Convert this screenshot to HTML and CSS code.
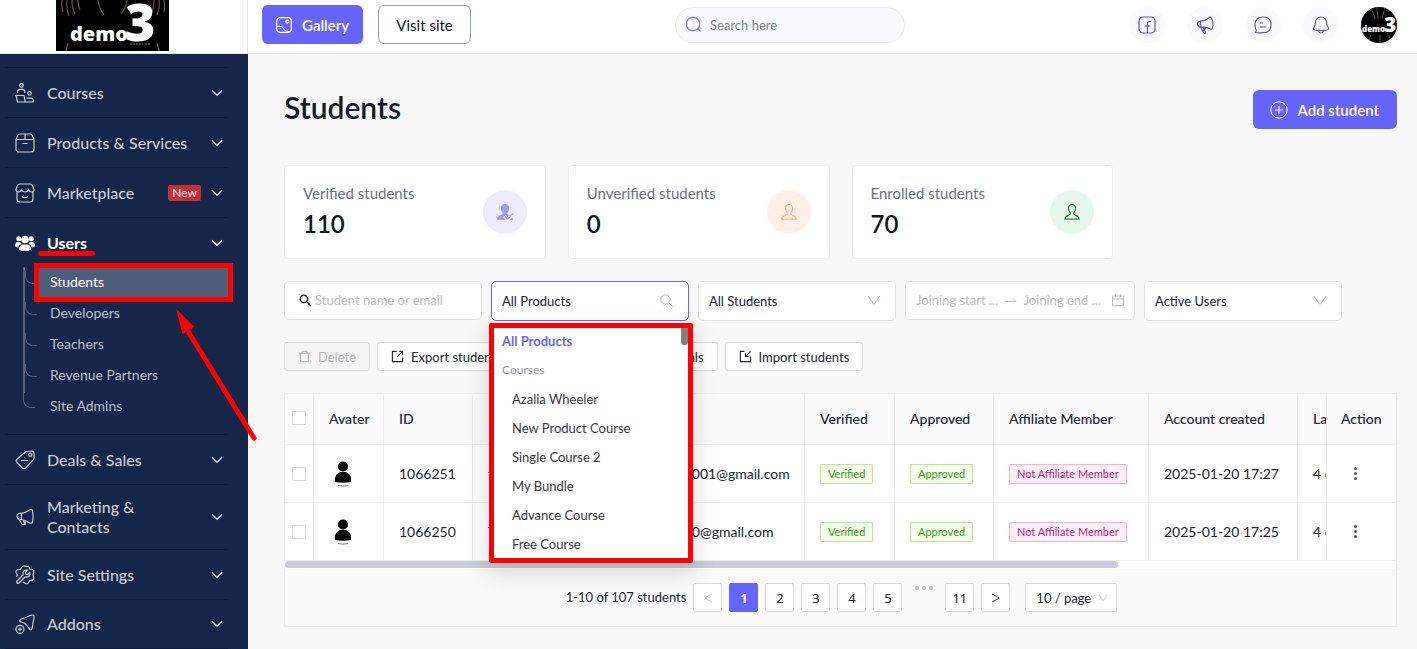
FILE: index.html
```html
<!DOCTYPE html>
<html lang="en">
<head>
<meta charset="utf-8">
<meta name="viewport" content="width=device-width, initial-scale=1">
<title>Students</title>
<link rel="stylesheet" href="styles.css">
</head>
<body>
<svg width="0" height="0" class="defs" aria-hidden="true">
  <symbol id="chev" viewBox="0 0 12 8"><path d="M1 1.2l5 5 5-5"/></symbol>
  <symbol id="vee" viewBox="0 0 14 11"><path d="M1 1l6 8.500L13 1"/></symbol>
  <symbol id="logo" viewBox="0 0 113 51">
    <rect width="113" height="51" fill="#000"/>
    <path d="M6 0q-1 6 1 12M11 0q-1 8 2 16M16 0q0 8 3 14M22 0q0 6 2 10M42 0q1 8 6 15M71 0q-1 8-6 14M98 0q0 8-3 15M103 0q1 8-2 15M108 0q1 6 0 12M12 43l-2 8M101 43l2 8" fill="none" stroke="#8a7450" stroke-width="1.2" opacity=".75"/>
    <text x="14" y="41" class="logo-text" font-size="20">demo</text>
    <text x="69" y="41" class="logo-text" font-size="52">3</text>
    <path d="M74 44h13M89 44h5" stroke="#777" stroke-width="1" stroke-dasharray="2 1"/>
  </symbol>
  <symbol id="user" viewBox="0 0 18 18"><path d="M9 1.5c-2.400 0-3.700 1.800-3.500 4.200.1 1.700.8 3.200 1.700 4 .4.900.1 1.700-.8 2.100-2 .8-4.400 1.300-4.700 4.400h14.600c-.3-3.100-2.700-3.600-4.700-4.400-.9-.4-1.200-1.200-.8-2.100.9-.8 1.600-2.300 1.700-4C12.700 3.300 11.400 1.500 9 1.500z"/></symbol>
  <symbol id="person" viewBox="0 0 18 28"><circle cx="9" cy="6.500" r="5" fill="#000"/><path d="M1 22v-3c0-4 3-7.300 8-7.300s8 3.300 8 7.300v3q-8 1.300-16 0z" fill="#000"/><path d="M4 25.500q5 1.300 10 0" fill="none" stroke="#555" stroke-width=".8"/></symbol>
  <symbol id="exp" viewBox="0 0 14 14"><path d="M6 1.500H1.500v11h11V8M6.500 7.500L12.500 1.500M9 1.500h3.500V5"/></symbol>
  <symbol id="imp" viewBox="0 0 14 14"><path d="M6 1.500H1.500v11h11V7M12.500 1.500l-5 5M7 3.500v3.500h3.500"/></symbol>
</svg>

<div class="app">
  <aside class="sidebar">
    <a class="brand" href="#"><svg class="brand-logo" role="img" aria-label="demo 3"><use href="#logo"/></svg></a>
    <nav class="menu">
      <a class="item" href="#">
        <svg class="ic" viewBox="0 0 20 20"><circle cx="6.500" cy="2.500" r="1.800"/><circle cx="14.500" cy="10.300" r="1.800"/><path d="M2.500 10V8.500C2.500 7 3.400 6.300 5 6.300h2.500c1.500 0 2.300.8 2.300 2.200V10M1 12.500h8l1.200 6.500H2.500zM9.500 19h8.700v-1.800c0-1.300-.6-2-2-2h-4.500"/></svg>
        <span class="label">Courses</span><svg class="chev"><use href="#chev"/></svg></a>
      <a class="item" href="#">
        <svg class="ic" viewBox="0 0 20 20"><path d="M1 6.500L2.700 2.600Q3.300 1 5 1h10q1.700 0 2.300 1.600L19 6.500V16q0 3-3 3H4q-3 0-3-3zM1 6.500h18M10 1v5.500M7.500 10.500h5"/></svg>
        <span class="label">Products &amp; Services</span><svg class="chev"><use href="#chev"/></svg></a>
      <a class="item" href="#">
        <svg class="ic" viewBox="0 0 20 20"><path d="M2 9v7q0 3 3 3h10q3 0 3-3V9M1 6.500L2.300 3Q3 1 5 1h10q2 0 2.700 2L19 6.500q0 2.500-2.300 2.500-2.200 0-3.200-2.300Q12.500 9 10 9T6.500 6.700Q5.500 9 3.300 9 1 9 1 6.500zM7 13.500q3 2.500 6 0"/></svg>
        <span class="label">Marketplace</span><span class="new">New</span><svg class="chev"><use href="#chev"/></svg></a>
      <div class="group">
        <a class="item active" href="#">
          <svg class="ic solid" viewBox="0 0 20 18"><circle cx="10" cy="5.500" r="3.800"/><circle cx="3.800" cy="4.800" r="2.500"/><circle cx="16.200" cy="4.800" r="2.500"/><path d="M4 16q0-5.500 4-5.500h4q4 0 4 5.500-6 1.700-12 0zM0 12.300Q0 8 3 8h2.200q1 2 1.300 2-2.800.6-3.400 3.500-2-.2-3.100-1.200zM20 12.300Q20 8 17 8h-2.200q-1 2-1.300 2 2.800.6 3.400 3.500 2-.2 3.100-1.200z"/></svg>
          <span class="label">Users</span><svg class="chev"><use href="#chev"/></svg></a>
        <ul class="sub">
          <li class="current"><a href="#">Students</a></li>
          <li><a href="#">Developers</a></li>
          <li><a href="#">Teachers</a></li>
          <li><a href="#">Revenue Partners</a></li>
          <li><a href="#">Site Admins</a></li>
        </ul>
        <span class="mark-line"></span>
        <svg class="mark-arrow" viewBox="0 0 84 136" aria-hidden="true"><path d="M80 131L15 26" stroke="#f00" stroke-width="5" stroke-linecap="round"/><path d="M2 2l18.500 18L8.500 27z" fill="#f00"/></svg>
      </div>
      <a class="item" href="#">
        <svg class="ic" viewBox="0 0 20 20"><path d="M11.500 1.500L17 1q2 0 2 2v5q0 1-.8 1.800L10.500 18q-1.500 1.500-3 0L2 12.500q-1.800-1.700 0-3.300l8-7q.7-.6 1.500-.7zM6 10.500h7"/><circle cx="15.300" cy="4.800" r="1.600"/><path d="M9.500 7.500v.5M9.500 13v.5"/></svg>
        <span class="label">Deals &amp; Sales</span><svg class="chev"><use href="#chev"/></svg></a>
      <a class="item" href="#">
        <svg class="ic" viewBox="0 0 20 20"><path d="M6 6.300Q10 6 14 3.200q2.700-1.800 3.500.5 1.500 5.300 0 11.500-.8 2-3.500.2Q10 12.800 6 12.500H5q-3-.2-3-3.200t3-3zM6.500 6.500v6M4.500 12.700l2 3.800q.7 1.300 2 .8t.7-1.700l-1-2.600M8.700 17.300h1.500v-3"/></svg>
        <span class="label">Marketing &amp;<br>Contacts</span><svg class="chev"><use href="#chev"/></svg></a>
      <a class="item" href="#">
        <svg class="ic" viewBox="0 0 20 20"><path d="M5.500 16.500L4 18q-1 1-2 0t0-2l6-6Q7.500 7 9 5.800q1.500-1 3.500-.6l-2 2 .3 2 2 .3 2-2q.6 2-.6 3.500-1.500 1.300-4.200 1zM1.500 12L2.500 10 1 7.500q-.5-1.500 1-2.500l3-.5L7 2q1-1.500 3-.9t3 .4 1.700 2.500l3 .5q1.600 1 1 2.700L18 10l.8 2.700q.4 1.800-1.300 2.500l-2.800.4-1.500 2.400q-1.200 1.200-2.700.5L8 17"/></svg>
        <span class="label">Site Settings</span><svg class="chev"><use href="#chev"/></svg></a>
      <a class="item last" href="#">
        <svg class="ic" viewBox="0 0 20 20"><path d="M5 7.500Q4.200 6 6 5.200L16 1.300q3.500-1 3 2.200L17 14.500q-.8 2.500-2.300.8L12 11.500q-1-1.500-2.500-2.300z"/><circle cx="5" cy="15.300" r="4"/><path d="M5 13.300v4M3 15.300h4"/></svg>
        <span class="label">Addons</span><svg class="chev"><use href="#chev"/></svg></a>
    </nav>
  </aside>

  <div class="page">
    <header class="topbar">
      <button class="btn primary gallery"><svg viewBox="0 0 16 16"><rect x=".7" y=".7" width="14.600" height="14.600" rx="3.500"/><circle cx="11.300" cy="4.600" r="1.500"/><path d="M1 9.500q5-1 6.500 2t7 3.500"/></svg>Gallery</button>
      <button class="btn outline">Visit site</button>
      <label class="search"><svg viewBox="0 0 18 18"><circle cx="8" cy="8" r="6.700"/><path d="M13 13l2.800 2.500"/></svg><input type="search" placeholder="Search here" aria-label="Search here"></label>
      <div class="tools">
        <button aria-label="Facebook"><svg viewBox="0 0 18 18"><rect x="1" y="1" width="16" height="16" rx="4"/><path d="M13 5.500h-1.500q-2 0-2 2V17M7 10h5.500"/></svg></button>
        <button aria-label="Announcements"><svg viewBox="0 0 18 18"><path d="M4.500 5Q10 5 13 1.500q1-1 2 0Q18 6 16.500 12q-.5 1.500-2 1Q9 10.500 5 11.500M4.500 5Q1.500 5.500 1.500 8T5 11.500zM5 11.500q1 3 3 5.500 1.500.8 1.500-.8Q9 13.500 6.500 11.300M7 15l3-3.500"/></svg></button>
        <button aria-label="Messages"><svg viewBox="0 0 18 18"><path d="M1.500 16.500q.7-1 .7-2.500Q1 12 1 9q0-8 8-8t8 8-8 7.700q-4 .6-7.500-.2zM6 7h3M6 11h6"/></svg></button>
        <button aria-label="Notifications"><svg viewBox="0 0 18 18"><path d="M9 1Q4 1 3.500 6.500 3.500 9 1.800 11.500q-1 2 1 2.500 6.200 1 12.400 0 2-.5 1-2.500Q14.500 9 14.500 6.500 14 1 9 1zM6.500 14.800Q7 17 9 17t2.500-2.200"/></svg></button>
        <a class="avatar" href="#" aria-label="Account"><svg viewBox="0 0 36 36"><rect width="36" height="36" fill="#000"/><path d="M10 0l4 12M16 0l1 12M24 0l-3 12M10 28l-3 8M19 28v8M28 28l3 8" stroke="#555"/><text x="1" y="25" class="logo-text" font-size="8">demo</text><text x="23" y="25" class="logo-text" font-size="21">3</text></svg></a>
      </div>
    </header>

    <main>
      <div class="head">
        <h1>Students</h1>
        <button class="btn primary add"><svg viewBox="0 0 18 18"><circle cx="9" cy="9" r="8.200"/><path d="M9 5v8M5 9h8"/></svg>Add student</button>
      </div>

      <section class="cards">
        <div class="card"><div><p>Verified students</p><strong>110</strong></div><span class="round violet"><svg viewBox="0 0 18 18"><use href="#user" fill="currentColor"/><path d="M8.500 13l3 3.500 6-5.500" stroke="#eeebff" stroke-width="3.500"/><path d="M9 13.500l2.500 2.700 6-6"/></svg></span></div>
        <div class="card"><div><p>Unverified students</p><strong>0</strong></div><span class="round peach"><svg><use href="#user"/></svg></span></div>
        <div class="card"><div><p>Enrolled students</p><strong>70</strong></div><span class="round green"><svg><use href="#user"/></svg></span></div>
      </section>

      <section class="filters">
        <label class="field name"><svg class="mag" viewBox="0 0 14 14"><circle cx="5.300" cy="5.300" r="3.900"/><path d="M8.300 8.300l4.500 4.500"/></svg><input type="text" placeholder="Student name or email" aria-label="Student name or email"></label>
        <div class="field open">
          <input type="text" role="combobox" aria-expanded="true" aria-label="Product" value="All Products">
          <svg class="mag grey" viewBox="0 0 14 14"><circle cx="5.500" cy="5.500" r="4.700"/><path d="M9 9l4.500 4.500"/></svg>
          <ul class="drop" role="listbox">
            <li class="sel" role="option">All Products</li>
            <li class="cap">Courses</li>
            <li class="opt" role="option">Azalia Wheeler</li>
            <li class="opt" role="option">New Product Course</li>
            <li class="opt" role="option">Single Course 2</li>
            <li class="opt" role="option">My Bundle</li>
            <li class="opt" role="option">Advance Course</li>
            <li class="opt" role="option">Free Course</li>
          </ul>
        </div>
        <div class="field"><select aria-label="Student group"><option>All Students</option></select><svg class="down"><use href="#vee"/></svg></div>
        <div class="field dates"><input type="text" placeholder="Joining start ..." aria-label="Joining start date"><svg class="arr" viewBox="0 0 12 6"><path d="M0 4.500h11L8 1.500"/></svg><input type="text" placeholder="Joining end ..." aria-label="Joining end date"><svg class="cal" viewBox="0 0 12 12"><path d="M.5 2h11v9.500H.5zM.5 5h11M3.500 0v3.500M8.500 0v3.500"/></svg></div>
        <div class="field"><select aria-label="User status"><option>Active Users</option></select><svg class="down"><use href="#vee"/></svg></div>
      </section>

      <section class="actions">
        <button class="small" disabled><svg viewBox="0 0 14 14"><path d="M1 3.500h12M4.500 3.500v-2h5v2M2.500 3.500l.5 9h8l.5-9"/></svg>Delete</button>
        <button class="small"><svg><use href="#exp"/></svg>Export students</button>
        <button class="small wide"><svg><use href="#exp"/></svg>Send login credentials</button>
        <button class="small"><svg><use href="#imp"/></svg>Import students</button>
      </section>

      <section class="panel">
        <table>
          <colgroup><col class="c-check"><col class="c-avatar"><col class="c-id"><col class="c-name"><col><col class="c-ver"><col class="c-app"><col class="c-aff"><col class="c-date"><col class="c-last"><col class="c-act"></colgroup>
          <thead><tr><th><input type="checkbox" aria-label="Select all"></th><th>Avater</th><th>ID</th><th>Name</th><th>Email</th><th>Verified</th><th>Approved</th><th>Affiliate Member</th><th>Account created</th><th class="cut">Last login</th><th>Action</th></tr></thead>
          <tbody>
            <tr><td><input type="checkbox" aria-label="Select 1066251"></td><td><svg class="person"><use href="#person"/></svg></td><td>1066251</td><td>test</td><td>student001@gmail.com</td><td><span class="tag ok">Verified</span></td><td><span class="tag ok">Approved</span></td><td><span class="tag pink">Not Affiliate Member</span></td><td>2025-01-20 17:27</td><td class="cut">4 days ago</td><td><button class="more" aria-label="More actions"><i></i><i></i><i></i></button></td></tr>
            <tr><td><input type="checkbox" aria-label="Select 1066250"></td><td><svg class="person"><use href="#person"/></svg></td><td>1066250</td><td>Test</td><td>student0@gmail.com</td><td><span class="tag ok">Verified</span></td><td><span class="tag ok">Approved</span></td><td><span class="tag pink">Not Affiliate Member</span></td><td>2025-01-20 17:25</td><td class="cut">4 days ago</td><td><button class="more" aria-label="More actions"><i></i><i></i><i></i></button></td></tr>
          </tbody>
        </table>
        <div class="hbar"><span></span></div>
        <div class="pager">
          <span class="total">1-10 of 107 students</span>
          <button disabled aria-label="Previous page"><svg viewBox="0 0 10 10"><path d="M9 1L1.500 5 9 9"/></svg></button>
          <button class="on">1</button><button>2</button><button>3</button><button>4</button><button>5</button>
          <span class="dots"><i></i><i></i><i></i></span>
          <button>11</button>
          <button aria-label="Next page"><svg viewBox="0 0 10 10"><path d="M1 1l7.500 4L1 9"/></svg></button>
          <div class="size"><select aria-label="Rows per page"><option>10 / page</option></select><svg class="down"><use href="#vee"/></svg></div>
        </div>
      </section>
    </main>
  </div>
</div>
</body>
</html>
```
FILE: styles.css
```css
* { box-sizing: border-box; }
body { margin: 0; font-family: Lato, "Liberation Sans", sans-serif; font-size: 14px; color: #20242c; background: #f8f8f8; }
button, input, select { font: inherit; color: inherit; margin: 0; }
button { cursor: pointer; }
a { color: inherit; text-decoration: none; }
svg { fill: none; stroke: currentColor; flex: none; display: block; }
ul { list-style: none; margin: 0; padding: 0; }
p { margin: 0; }
.defs { position: absolute; }
.logo-text { font-family: "Open Sans", sans-serif; font-weight: 800; fill: #fff; stroke: none; }
.app { display: flex; height: 100vh; overflow: hidden; }

/* sidebar */
.sidebar { flex: none; width: 248px; background: #152649; color: #c9cdd5; }
.brand { display: flex; justify-content: center; height: 54px; background: #fff; border-right: 1px solid #e3e5e8; border-bottom: 1px solid #e3e5e8; padding-right: 22px; }
.brand-logo { width: 113px; height: 51px; stroke: none; }
.menu { padding: 13px 20px 0 5px; }
.item { display: flex; align-items: center; gap: 12px; min-height: 50px; padding: 12px 5px 12px 10px; border-top: 1px solid #0f1d3b; font-size: 16px; line-height: 20px; font-weight: 500; }
.item.last { border-bottom: 1px solid #0f1d3b; }
.label { flex: 1; }
.ic { width: 20px; height: 20px; stroke-width: 1.200; overflow: visible; }
.ic.solid { fill: currentColor; stroke: none; height: 18px; }
.chev { width: 12px; height: 8px; stroke-width: 1.600; }
.active { color: #fff; font-weight: 700; }
.new { background: #c42f3c; color: #f0d9dd; border-radius: 2px; font-size: 12px; line-height: 16px; padding: 0 4px; margin-right: -2px; }
.group { position: relative; padding-bottom: 13px; }
.sub { margin-left: 18px; border-left: 2px solid #55607a; height: 126px; margin-bottom: 28px; font-size: 14px; }
.sub li { position: relative; height: 31px; padding: 1px 0 1px 14px; }
.sub li::before { content: ""; position: absolute; left: 0; top: 4px; width: 11px; height: 12px; border-left: 1px solid #55607a; border-bottom: 1px solid #55607a; border-bottom-left-radius: 8px; }
.sub li:last-child::before { left: -2px; top: 1px; height: 15px; }
.sub a { display: block; height: 29px; line-height: 28px; padding-left: 11px; color: #b9bfca; }
.sub .current a { position: relative; background: #4f5d78; color: #fff; outline: 5px solid #f00; }
.mark-line { position: absolute; left: 33px; top: 34px; width: 57px; height: 5px; border-radius: 3px; background: #f00; }
.mark-arrow { position: absolute; z-index: 5; left: 169px; top: 90px; width: 84px; height: 136px; stroke: none; }

/* top bar */
.page { flex: 1; min-width: 0; }
.topbar { display: flex; align-items: center; height: 54px; padding: 0 20px 4px 14px; background: #fff; border-bottom: 1px solid #e3e5e8; }
.btn { display: flex; align-items: center; justify-content: center; height: 39px; border-radius: 6px; font-size: 15px; }
.primary { border: 0; background: #6763ff; color: #fff; font-weight: 600; }
.gallery { padding: 0 14px; gap: 10px; }
.gallery svg { width: 16px; height: 16px; stroke-width: 1.200; }
.outline { margin-left: 15px; width: 93px; background: #fff; border: 1px solid #94a0b3; color: #14181f; }
.search { display: flex; align-items: center; gap: 7px; width: 230px; height: 36px; margin-left: 204px; padding: 0 9px; border: 1px solid #eceef2; border-radius: 18px; background: #f9fafc; color: #8884ff; }
.search svg { width: 18px; height: 18px; stroke-width: 1.400; }
input { border: 0; outline: 0; background: none; padding: 0; min-width: 0; width: 100%; }
.search input { font-size: 13px; }
.search input::placeholder { color: #80858f; }
.tools { display: flex; gap: 22px; margin-left: auto; }
.tools button { display: flex; align-items: center; justify-content: center; width: 36px; height: 36px; padding: 0; border: 0; border-radius: 50%; background: #f9fafc; color: #554fe0; }
.tools button svg { width: 18px; height: 18px; stroke-width: 1.200; }
.avatar svg { width: 36px; height: 36px; border-radius: 50%; }

/* content */
main { padding: 36px 20px 0 36px; }
.head { display: flex; justify-content: space-between; align-items: flex-start; height: 39px; }
h1 { margin: 0; font-size: 30px; line-height: 34px; font-weight: 600; color: #141a26; }
.add { padding: 0 18px 0 17px; gap: 10px; }
.add svg { width: 18px; height: 18px; stroke-width: 1; }
.cards { display: grid; grid-template-columns: repeat(4, 1fr); gap: 22px; margin-top: 36px; }
.card { display: flex; justify-content: space-between; align-items: center; height: 94px; padding: 0 18px; background: #fff; border: 1px solid #ededf0; border-radius: 4px; }
.card div { padding-bottom: 2px; }
.card p { font-size: 15px; line-height: 20px; color: #6b7482; }
.card strong { display: block; margin-top: 6px; font-size: 24px; line-height: 30px; font-weight: 600; color: #10151f; }
.round { display: flex; align-items: center; justify-content: center; width: 44px; height: 44px; border-radius: 50%; }
.round svg { width: 18px; height: 18px; stroke-width: 1.200; }
.violet { background: #eeebff; color: #a29bff; }
.peach { background: #ffefe8; color: #ffb18d; }
.green { background: #e4f8ec; color: #3c7d4d; }

.filters { display: flex; gap: 9px; margin-top: 22px; font-size: 13px; }
.field { position: relative; display: flex; align-items: center; flex: 0 1 198px; min-width: 0; height: 40px; padding: 0 10px 1px; background: #fff; border: 1px solid #e2e2e4; border-radius: 5px; }
.field input::placeholder { color: #bdbdbf; opacity: 1; }
.field.name { padding-left: 14px; gap: 3px; height: 39px; }
.mag { width: 13px; height: 13px; stroke-width: 1.600; }
.grey { width: 14px; height: 14px; color: #b5b5b8; stroke-width: 1; margin-right: 4px; }
.open { border-color: #6763ff; }
select { appearance: none; width: 100%; border: 0; background: none; outline: 0; padding: 0; }
.down { width: 14px; height: 11px; margin-right: 4px; color: #b5b5b8; stroke-width: 1; pointer-events: none; }
.dates { flex-basis: 230px; gap: 7px; height: 39px; }
.dates input { width: auto; flex: 1 1 0; }
.arr { width: 12px; height: 6px; color: #bdbdbf; }
.cal { width: 12px; height: 12px; color: #bdbdbf; }
.drop { position: absolute; z-index: 4; left: -3px; top: 41px; width: 204px; height: 240px; overflow: hidden; background: #fff; border: 5px solid #f00; border-radius: 2px; box-shadow: 0 8px 20px 4px rgba(0,0,0,.12); color: #3a3a3d; }
.drop li { height: 29px; line-height: 26px; padding-left: 8px; }
.drop .opt { padding-left: 18px; }
.drop .sel { color: #6763ff; font-weight: 700; }
.drop .cap { font-size: 12px; color: #98989b; }
.drop::after { content: ""; position: absolute; right: 0; top: 0; width: 7px; height: 17px; background: #808080; border-radius: 0 0 3px 3px; }

.actions { display: flex; gap: 7px; margin-top: 21px; }
.small { display: flex; align-items: center; gap: 7px; height: 29px; padding: 0 13px; border: 1px solid #d9d9da; border-radius: 3px; background: #fff; font-size: 13px; color: #22252b; }
.small svg { width: 13px; height: 13px; stroke-width: 1.200; }
.small:disabled { background: #f4f4f4; color: #b9b9bb; }
.wide { width: 195px; justify-content: flex-end; }

/* table */
.panel { margin-top: 22px; border: 1px solid #efeff0; background: #fafafa; }
table { width: 100%; table-layout: fixed; border-collapse: separate; border-spacing: 0; }
.c-check { width: 29px; } .c-avatar { width: 70px; } .c-id { width: 89px; } .c-name { width: 157px; }
.c-ver { width: 90px; } .c-app { width: 99px; } .c-aff { width: 155px; } .c-date { width: 149px; }
.c-last { width: 29px; } .c-act { width: 69px; }
th, td { height: 58px; padding: 0 0 0 15px; border-right: 1px solid #efeff0; border-bottom: 1px solid #efeff0; text-align: left; white-space: nowrap; font-weight: 400; background: #fff; font-size: 14px; }
th { height: 51px; padding-bottom: 2px; background: #fafafa; font-weight: 500; }
tr > :last-child { border-right: 0; padding-left: 14px; }
tr > :first-child { padding-left: 7px; }
.cut { overflow: hidden; }
input[type=checkbox] { appearance: none; display: block; width: 14px; height: 14px; border: 1px solid #d9d9da; border-radius: 1px; background: #fff; }
.person { width: 18px; height: 28px; margin-left: 5px; stroke: none; }
.tag { display: inline-block; padding: 0 7px; border: 1px solid; border-radius: 1px; font-size: 11px; line-height: 18px; }
.ok { color: #389e0d; background: #f6ffed; border-color: #b7eb8f; }
.pink { color: #c41d7f; background: #fff0f6; border-color: #ffadd2; }
.more { display: flex; flex-direction: column; gap: 2px; padding: 0 13px; border: 0; background: none; }
.more i { width: 3px; height: 3px; border-radius: 50%; background: #555; }
.hbar { height: 8px; background: #fff; }
.hbar span { display: block; width: 75%; height: 7px; border-radius: 4px; background: #c9cdd6; }
.pager { display: flex; justify-content: center; gap: 7px; padding: 14px 0 14px 2px; }
.total { line-height: 28px; font-size: 13px; }
.pager button { display: flex; align-items: center; justify-content: center; width: 29px; height: 29px; padding: 0; border: 1px solid #d9d9da; border-radius: 2px; background: #fff; font-family: "Noto Sans", sans-serif; font-size: 13px; }
.pager button svg { width: 10px; height: 10px; stroke-width: 1; }
.pager button:disabled { color: #c2c2c4; }
.pager .on { background: #6763ff; border-color: #6763ff; color: #fff; font-weight: 700; }
.dots { display: flex; justify-content: center; gap: 3px; width: 29px; padding-top: 3px; }
.dots i { width: 4px; height: 4px; border-radius: 50%; background: #c0c0c2; }
.size { display: flex; align-items: center; width: 92px; height: 29px; margin-left: 8px; padding: 0 4px 0 10px; border: 1px solid #d9d9da; border-radius: 2px; background: #fff; font-size: 13px; }
.size .down { width: 10px; height: 8px; }
```
